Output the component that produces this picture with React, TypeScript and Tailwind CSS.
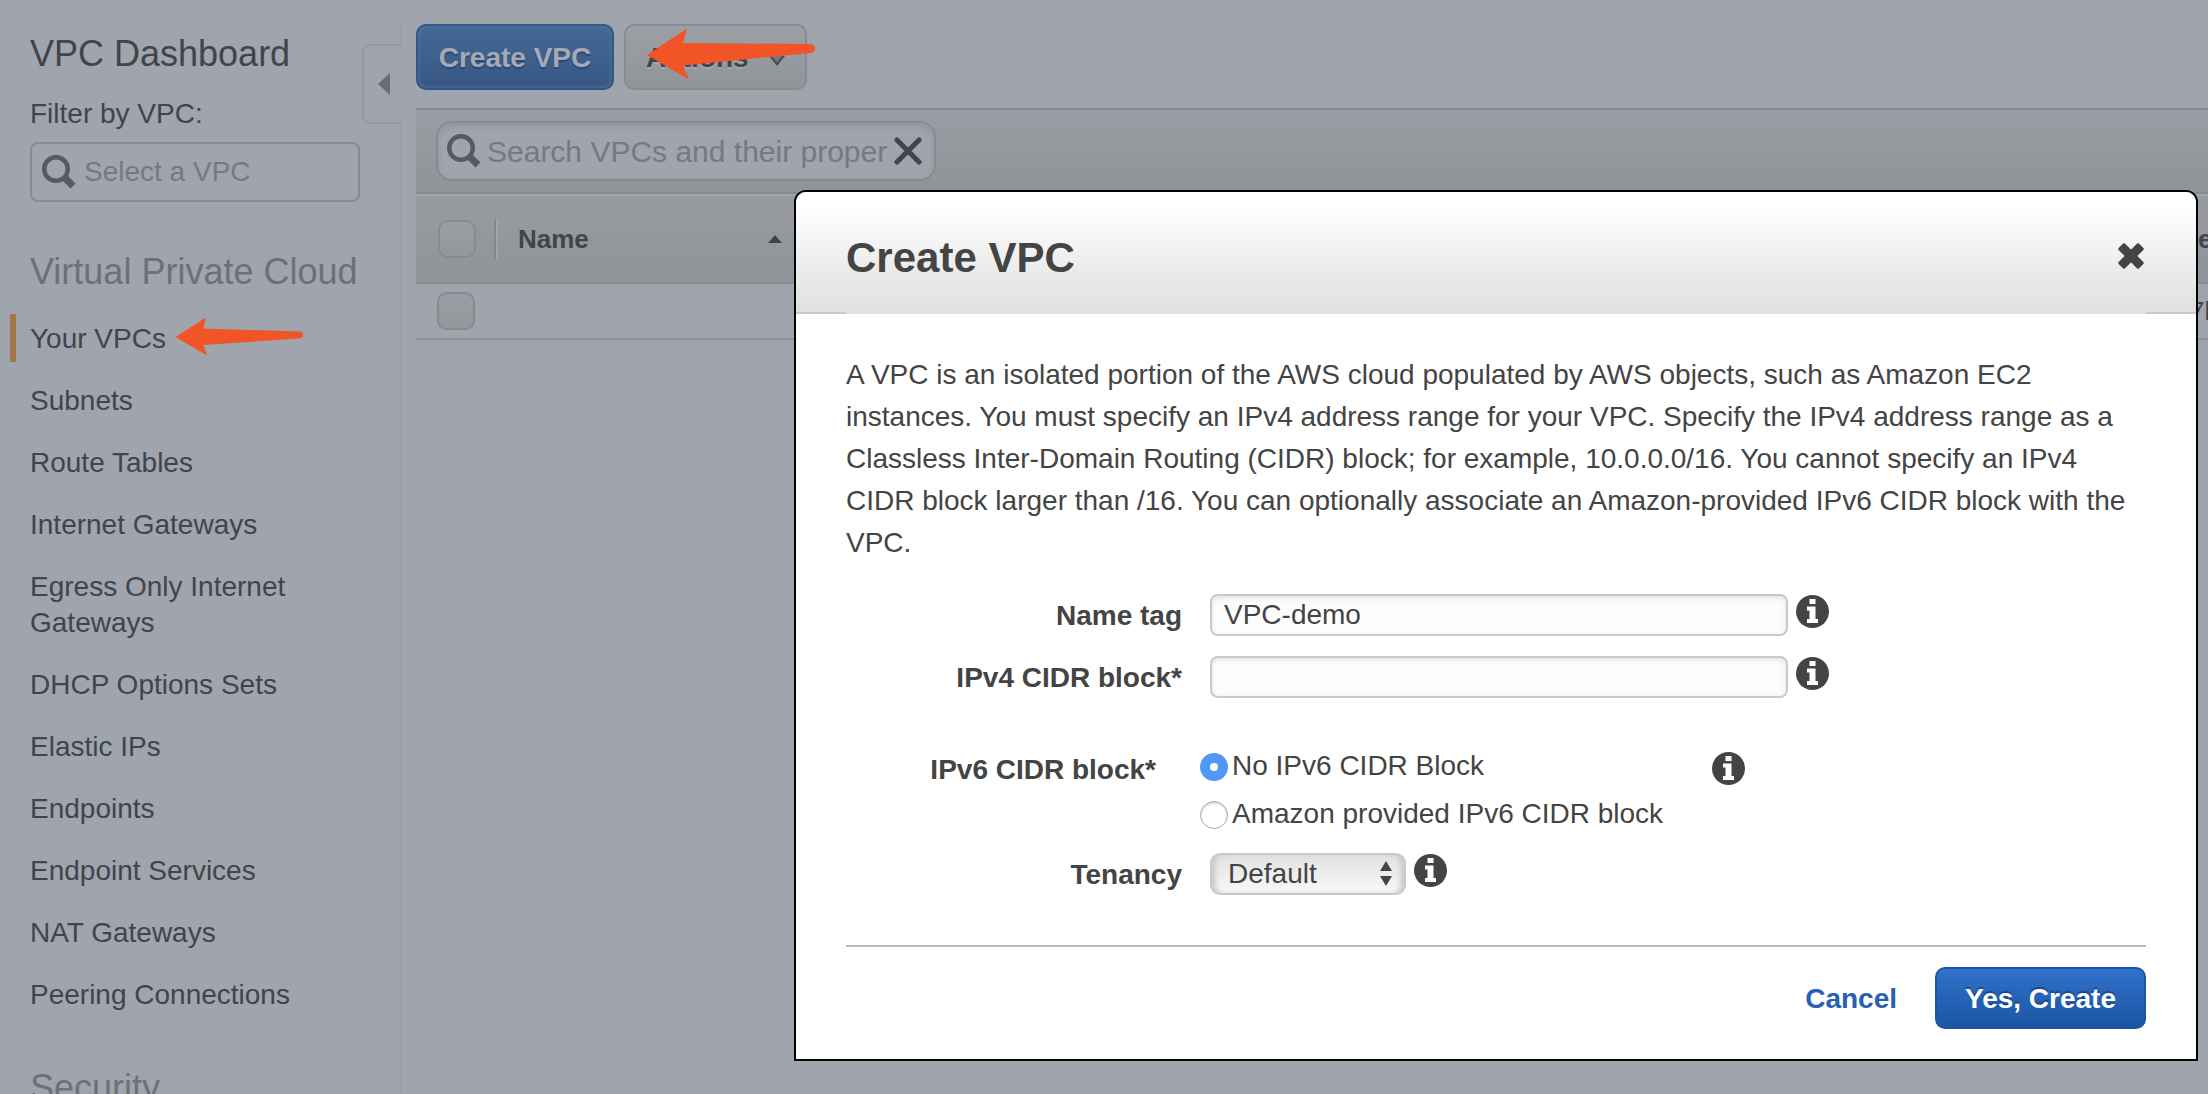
import React, { useState } from "react";

const navItems = [
  "Your VPCs",
  "Subnets",
  "Route Tables",
  "Internet Gateways",
  "Egress Only Internet Gateways",
  "DHCP Options Sets",
  "Elastic IPs",
  "Endpoints",
  "Endpoint Services",
  "NAT Gateways",
  "Peering Connections",
];

function SearchIcon() {
  return (
    <svg viewBox="0 0 34 34" className="size-[34px] shrink-0" aria-hidden="true">
      <circle cx="14" cy="14" r="11.8" fill="none" stroke="#555a63" strokeWidth="4.4" />
      <path d="M22 22 L31 31" stroke="#555a63" strokeWidth="7" />
    </svg>
  );
}

function InfoIcon() {
  return (
    <svg viewBox="0 0 33 33" className="size-[33px]" aria-hidden="true">
      <circle cx="16.5" cy="16.5" r="16.5" fill="#444" />
      <path d="M13.5 4h6v5h-6zM11 11.500h8.500v12.500h2.500v4h-11v-4h2.500v-8.500h-2.500z" fill="#fff" />
    </svg>
  );
}

function InfoButton({ label }: { label: string }) {
  return (
    <button type="button" aria-label={label} className="mt-px shrink-0">
      <InfoIcon />
    </button>
  );
}

function Sidebar() {
  return (
    <aside className="flex w-[402px] shrink-0 items-stretch pt-6">
      <div className="w-[362px] shrink-0 pt-2">
        <h2 className="pl-[30px] text-[36px] leading-[44px]">VPC Dashboard</h2>
        <label htmlFor="vpc-filter" className="mt-5 block pl-[30px] text-[28px] leading-9">
          Filter by VPC:
        </label>
        <div className="mt-2.5 ml-[30px] flex h-[60px] w-[330px] items-center gap-2 rounded-lg border-2 border-[#868a94] pl-2.5">
          <SearchIcon />
          <input
            id="vpc-filter"
            type="text"
            placeholder="Select a VPC"
            className="min-w-0 flex-1 bg-transparent text-[28px] leading-9 outline-none placeholder:text-[#757a81]"
          />
        </div>
        <h3 className="mt-12 pl-[30px] text-[36px] leading-[44px] text-[#6c7178]">Virtual Private Cloud</h3>
        <nav className="mt-5">
          <ul className="flex flex-col gap-3.5">
            {navItems.map((item, index) => (
              <li key={item} className="pl-2.5">
                <a
                  href="#"
                  className={
                    index === 0
                      ? "relative block border-l-6 border-[#a2784b] pt-[7px] pb-[5px] pl-3.5 text-[28px] leading-9"
                      : "block border-l-6 border-transparent pt-[7px] pb-[5px] pl-3.5 text-[28px] leading-9"
                  }
                >
                  {item}
                  {index === 0 && (
                    <svg viewBox="0 0 128 40" className="absolute top-1 left-[159px] h-10 w-32" aria-hidden="true">
                      <path
                        d="M0.500 19 L31 -0.500 L28.500 10.500 L125 13.500 Q128 14 128 17 Q128 20 125 20.500 L28.500 27 L32 37.500 Z"
                        fill="#f15427"
                      />
                    </svg>
                  )}
                </a>
              </li>
            ))}
          </ul>
        </nav>
        <h3 className="mt-12 pl-[30px] text-[36px] leading-[44px] text-[#6c7178]">Security</h3>
      </div>
      <div className="flex w-10 flex-col">
        <div className="h-5 border-r-2 border-[#989ca4]" />
        <button
          type="button"
          aria-label="Collapse sidebar"
          className="flex h-20 items-center rounded-l-lg border-2 border-r-0 border-[#94989f] pl-3.5"
        >
          <svg viewBox="0 0 12 22" className="h-[22px] w-3" aria-hidden="true">
            <path d="M12 0 V22 L0 11 Z" fill="#686d75" />
          </svg>
        </button>
        <div className="flex-1 border-r-2 border-[#989ca4]" />
      </div>
    </aside>
  );
}

const checkboxClass =
  "block size-[38px] appearance-none rounded-[10px] border-2 border-[#868a91] bg-linear-to-b from-[#9b9fa5] to-[#93979b]";

function MainPanel() {
  return (
    <main className="min-w-0 flex-1 pt-6 pl-3.5">
      <div className="flex gap-2.5">
        <button
          type="button"
          className="h-[66px] w-[198px] rounded-[10px] border-2 border-[#345684] bg-linear-to-b from-[#446995] to-[#375785] pt-0.5 text-[28px] font-bold text-[#a4aab5] shadow-[inset_0_0_4px_#5479a5] text-shadow-[0_2px_1px_#2c4870]"
        >
          Create VPC
        </button>
        <button
          type="button"
          className="relative flex h-[66px] w-[183px] items-center gap-5 rounded-[10px] border-2 border-[#878b93] bg-linear-to-b from-[#9ca0a5] to-[#909598] pt-0.5 pl-5 text-[28px] font-bold text-shadow-[0_2px_1px_#a5a9ae]"
        >
          Actions
          <svg viewBox="0 0 16 10" className="mt-1.5 h-2.5 w-4" aria-hidden="true">
            <path d="M0 0 H16 L8 10 Z" fill="#4a4f56" />
            <path d="M3 0 H13 L8 6.500 Z" fill="#747980" />
          </svg>
          <svg viewBox="0 0 168 52" className="absolute top-0.5 left-[21px] h-[52px] w-[168px]" aria-hidden="true">
            <path
              d="M0 27 L40 0.500 L36 15 L164 16 Q168 17 168 20.500 Q168 24.500 164 25 L36 37.500 L42 51.500 Z"
              fill="#f15427"
            />
          </svg>
        </button>
      </div>

      <div className="mt-[18px] flex h-[86px] items-center border-y-2 border-[#858a93] bg-linear-to-b from-[#999da3] to-[#8f9499] pl-5">
        <div className="flex h-[60px] w-[500px] items-center gap-1.5 rounded-[16px] border-2 border-[#868a93] bg-[#a0a4ac] pr-3 pl-[9px] shadow-[inset_0_3px_6px_#90949b]">
          <SearchIcon />
          <input
            type="text"
            aria-label="Search VPCs"
            placeholder="Search VPCs and their properties"
            className="min-w-0 flex-1 bg-transparent pt-0.5 text-[30px] leading-9 outline-none placeholder:text-[#757a81]"
          />
          <button type="button" aria-label="Clear search">
            <svg viewBox="0 0 28 28" className="size-7" aria-hidden="true">
              <path d="M3 3 L25 25 M25 3 L3 25" stroke="#40454d" strokeWidth="5" strokeLinecap="round" />
            </svg>
          </button>
        </div>
      </div>

      <table className="w-full table-fixed border-t-2 border-[#a0a4ac] text-left text-[26px]">
        <colgroup>
          <col className="w-[78px]" />
          <col />
          <col className="w-[18px]" />
        </colgroup>
        <thead>
          <tr className="h-[88px] border-b-2 border-[#858a92] bg-linear-to-b from-[#989ca1] to-[#8f9498]">
            <th className="pl-[22px]">
              <input type="checkbox" aria-label="Select all VPCs" className={checkboxClass} />
            </th>
            <th>
              <div className="flex h-10 items-center border-l-2 border-[#83878d]">
                <span className="flex h-10 w-[286px] items-center justify-between border-l-2 border-[#a1a5aa] pl-5">
                  Name
                  <svg viewBox="0 0 14 8" className="h-2 w-3.5" aria-hidden="true">
                    <path d="M7 0 L14 8 H0 Z" fill="#3f444b" />
                  </svg>
                </span>
              </div>
            </th>
            <th className="pl-2">e</th>
          </tr>
        </thead>
        <tbody>
          <tr className="h-14 border-b-2 border-[#8c9098]">
            <td className="pl-[21px]">
              <input type="checkbox" aria-label="Select VPC" className={checkboxClass} />
            </td>
            <td />
            <td className="whitespace-nowrap">7b</td>
          </tr>
        </tbody>
      </table>
    </main>
  );
}

const fieldClass =
  "h-[42px] w-[578px] rounded-lg border-2 border-[#c9c9c9] bg-[#fcfcfc] px-3 text-[28px] shadow-[inset_0_2px_5px_#e4e4e4] outline-none";
const labelClass = "w-[336px] shrink-0 pt-px text-right font-bold";
const radioClass =
  "mt-0.5 size-7 shrink-0 appearance-none rounded-full border border-[#a9a9a9] bg-white shadow-[inset_0_2px_2px_#ddd] checked:border-10 checked:border-[#5198f5] checked:shadow-none";

function CreateVpcDialog() {
  const [name, setName] = useState("VPC-demo");
  const [cidr, setCidr] = useState("");
  return (
    <div
      role="dialog"
      aria-labelledby="dialog-title"
      className="w-full max-w-[1404px] rounded-t-xl border-2 border-black bg-white text-[28px] leading-[42px] text-[#444]"
    >
      <header className="rounded-t-[10px] bg-linear-to-b from-white from-10% to-[#dfdfdf]">
        <div className="flex h-[120px] items-center justify-between px-[50px]">
          <h1 id="dialog-title" className="pt-3 text-[42px] leading-[50px] font-bold">
            Create VPC
          </h1>
          <button type="button" aria-label="Close" className="mt-2 mr-0.5">
            <svg viewBox="0 0 26 26" className="size-[26px]" aria-hidden="true">
              <path
                d="M6 1.500 L13 8.500 L20 1.500 L24.500 6 L17.500 13 L24.500 20 L20 24.500 L13 17.500 L6 24.500 L1.500 20 L8.500 13 L1.500 6 Z"
                fill="#444"
                stroke="#444"
                strokeWidth="2.5"
                strokeLinejoin="round"
              />
            </svg>
          </button>
        </div>
        <div className="flex h-0.5 justify-between">
          <span className="w-[50px] bg-[#c9c9c9]" />
          <span className="w-[50px] bg-[#c9c9c9]" />
        </div>
      </header>

      <form className="px-[50px] pt-10 pb-[30px]" onSubmit={(event) => event.preventDefault()}>
        <p>
          A VPC is an isolated portion of the AWS cloud populated by AWS objects, such as Amazon EC2 instances. You must
          specify an IPv4 address range for your VPC. Specify the IPv4 address range as a Classless Inter-Domain Routing
          (CIDR) block; for example, 10.0.0.0/16. You cannot specify an IPv4 CIDR block larger than /16. You can
          optionally associate an Amazon-provided IPv6 CIDR block with the VPC.
        </p>

        <div className="mt-[30px] flex h-[42px]">
          <label htmlFor="name-tag" className={labelClass}>
            Name tag
          </label>
          <div className="ml-7 flex items-start gap-2">
            <input
              id="name-tag"
              type="text"
              value={name}
              onChange={(event) => setName(event.target.value)}
              className={fieldClass}
            />
            <InfoButton label="About the name tag" />
          </div>
        </div>

        <div className="mt-5 flex h-[42px]">
          <label htmlFor="ipv4-block" className={labelClass}>
            IPv4 CIDR block*
          </label>
          <div className="ml-7 flex items-start gap-2">
            <input
              id="ipv4-block"
              type="text"
              value={cidr}
              onChange={(event) => setCidr(event.target.value)}
              className={fieldClass}
            />
            <InfoButton label="About the IPv4 CIDR block" />
          </div>
        </div>

        <div role="radiogroup" aria-labelledby="ipv6-label" className="mt-11 flex">
          <span id="ipv6-label" className="w-[310px] shrink-0 text-right leading-14 font-bold">
            IPv6 CIDR block*
          </span>
          <div className="ml-11 w-[512px]">
            <label className="flex h-12 items-center gap-1">
              <input type="radio" name="ipv6" defaultChecked className={radioClass} />
              No IPv6 CIDR Block
            </label>
            <label className="flex h-12 items-center gap-1">
              <input type="radio" name="ipv6" className={radioClass} />
              Amazon provided IPv6 CIDR block
            </label>
          </div>
          <div className="flex h-[52px] items-center">
            <InfoButton label="About the IPv6 CIDR block" />
          </div>
        </div>

        <div className="mt-[15px] flex h-[42px]">
          <label htmlFor="tenancy" className={labelClass}>
            Tenancy
          </label>
          <div className="ml-7 flex items-start gap-2">
            <div className="relative">
              <select
                id="tenancy"
                className="block h-[42px] w-[196px] appearance-none rounded-[10px] border-2 border-[#c9c9c9] bg-linear-to-b from-[#e2e2e2] to-[#f8f8f8] pl-4 text-[28px] leading-9 shadow-[inset_6px_0_6px_-3px_#c4c4c4,inset_-6px_0_6px_-3px_#c4c4c4]"
              >
                <option>Default</option>
              </select>
              <svg
                viewBox="0 0 12 25"
                className="pointer-events-none absolute top-2 right-3.5 h-[25px] w-3"
                aria-hidden="true"
              >
                <path d="M6 0 L12 10 H0 Z M0 15 H12 L6 25 Z" fill="#444" />
              </svg>
            </div>
            <InfoButton label="About tenancy" />
          </div>
        </div>

        <footer className="mt-[50px] flex items-center justify-end gap-[38px] border-t-2 border-[#bbb] pt-5">
          <button type="button" className="pt-0.5 font-bold text-[#2860b4]">
            Cancel
          </button>
          <button
            type="submit"
            className="h-[62px] w-[211px] rounded-[10px] border-2 border-[#1d56a3] bg-linear-to-b from-[#3072cc] to-[#1c54a2] pt-0.5 font-bold text-white text-shadow-[0_-2px_1px_#17478a]"
          >
            Yes, Create
          </button>
        </footer>
      </form>
    </div>
  );
}

export default function App() {
  return (
    <div className="relative flex h-screen overflow-hidden bg-[#a0a4ac] font-['Liberation_Sans',Arial,sans-serif] text-[#40454c]">
      <Sidebar />
      <MainPanel />
      <div className="absolute inset-0 flex items-start justify-end pt-[190px] pr-2.5">
        <CreateVpcDialog />
      </div>
    </div>
  );
}
